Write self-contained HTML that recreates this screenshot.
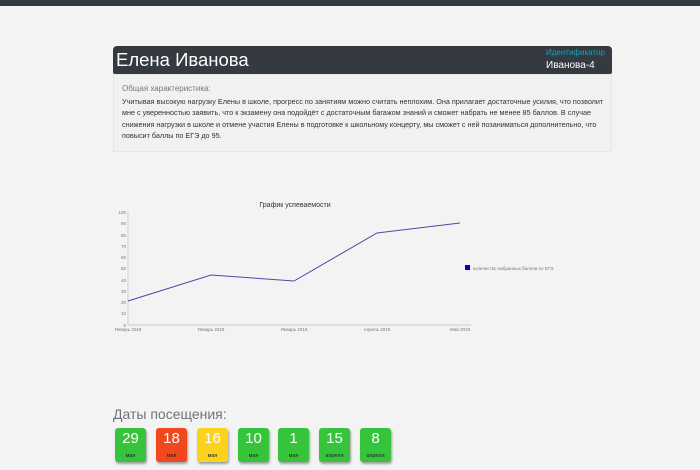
<!DOCTYPE html><html><head><meta charset="utf-8"><style>
body{margin:0;width:700px;height:470px;background:#f3f3f3;font-family:"Liberation Sans",sans-serif;position:relative;overflow:hidden}
.top{position:absolute;left:0;top:0;width:700px;height:6px;background:#343a40}
.hd{position:absolute;left:113px;top:46px;width:499px;height:28px;background:#343a40;border-radius:4px 4px 2px 2px;color:#fff}
.hd .n{position:absolute;left:3px;top:3px;font-size:18.5px}
.hd .l{position:absolute;left:433px;top:2px;font-size:8px;color:#17a2b8}
.hd .v{position:absolute;left:433px;top:14px;font-size:10px}
.card{position:absolute;left:113px;top:74px;width:499px;height:78px;background:#f1f1f1;border:1px solid #e6e6e6;box-sizing:border-box}
.card .t{position:absolute;left:8px;top:9px;font-size:8px;color:#777}
.card .p{position:absolute;left:8px;top:21px;width:484px;font-size:7.22px;line-height:11.3px;color:#333}
.dt{position:absolute;left:113px;top:406px;font-size:14px;color:#6c757d}
.b{position:absolute;top:428px;width:31px;height:34px;border-radius:3px;color:#fff;text-align:center;box-shadow:1px 2px 2px rgba(0,0,0,.35)}
.b .d{font-size:15px;margin-top:2px;line-height:18px}
.b .m{font-size:5.5px;color:#222;margin-top:5px}
.g{background:#36c43a}.r{background:#f0471f}.y{background:#fbd21c}
</style></head><body>
<div class="top"></div>
<div class="hd"><div class="n">Елена Иванова</div><div class="l">Идентификатор</div><div class="v">Иванова-4</div></div>
<div class="card"><div class="t">Общая характеристика:</div><div class="p">Учитывая высокую нагрузку Елены в школе, прогресс по занятиям можно считать неплохим. Она прилагает достаточные усилия, что позволит мне с уверенностью заявить, что к экзамену она подойдёт с достаточным багажом знаний и сможет набрать не менее 85 баллов. В случае снижения нагрузки в школе и отмене участия Елены в подготовке к школьному концерту, мы сможет с ней позаниматься дополнительно, что повысит баллы по ЕГЭ до 95.</div></div>
<svg style="position:absolute;left:0;top:0" width="700" height="470" font-family="Liberation Sans" fill="#777">
<text x="295" y="207" font-size="7" fill="#333" text-anchor="middle">График успеваемости</text>
<line x1="128" y1="211" x2="128" y2="325" stroke="#ccc" stroke-width="1"/>
<line x1="128" y1="325" x2="471" y2="325" stroke="#ccc" stroke-width="1"/>
<g font-size="4.5" text-anchor="end">
<text x="126" y="214">100</text><text x="126" y="225">90</text><text x="126" y="237">80</text><text x="126" y="248">70</text><text x="126" y="259">60</text><text x="126" y="270">50</text><text x="126" y="282">40</text><text x="126" y="293">30</text><text x="126" y="304">20</text><text x="126" y="315">10</text><text x="126" y="327">0</text></g>
<g font-size="4.5" text-anchor="middle">
<text x="128" y="331">Январь 2019</text><text x="211" y="331">Январь 2019</text><text x="294" y="331">Январь 2019</text><text x="377" y="331">Апрель 2019</text><text x="460" y="331">Май 2019</text></g>
<polyline points="128,301 211,275 294,281 377,233 460,223" fill="none" stroke="#4a4aa8" stroke-width="1"/>
<rect x="465" y="265" width="5" height="5" fill="#0000c0"/>
<text x="473" y="270" font-size="4.5">количество набранных баллов по ЕГЭ</text>
</svg>
<div class="dt">Даты посещения:</div>
<div class="b g" style="left:115px"><div class="d">29</div><div class="m">мая</div></div>
<div class="b r" style="left:156px"><div class="d">18</div><div class="m">мая</div></div>
<div class="b y" style="left:197px"><div class="d">16</div><div class="m">мая</div></div>
<div class="b g" style="left:238px"><div class="d">10</div><div class="m">мая</div></div>
<div class="b g" style="left:278px"><div class="d">1</div><div class="m">мая</div></div>
<div class="b g" style="left:319px"><div class="d">15</div><div class="m">апреля</div></div>
<div class="b g" style="left:360px"><div class="d">8</div><div class="m">апреля</div></div>
</body></html>
